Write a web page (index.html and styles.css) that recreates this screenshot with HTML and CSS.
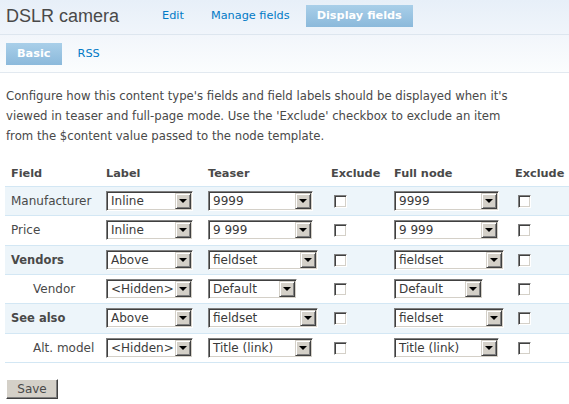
FILE: index.html
```html
<!DOCTYPE html>
<html>
<head>
<meta charset="utf-8">
<link rel="stylesheet" href="styles.css">
</head>
<body>
<div class="header">
  <h1 class="title">DSLR camera</h1>
  <ul class="tabs">
    <li class="tab"><a href="#">Edit</a></li>
    <li class="tab"><a href="#">Manage fields</a></li>
    <li class="tab active"><a href="#">Display fields</a></li>
  </ul>
</div>
<div class="subheader">
  <ul class="tabs">
    <li class="tab active"><a href="#">Basic</a></li>
    <li class="tab"><a href="#">RSS</a></li>
  </ul>
</div>
<p class="intro">Configure how this content type's fields and field labels should be displayed when it's viewed in teaser and full-page mode. Use the 'Exclude' checkbox to exclude an item from the $content value passed to the node template.</p>
<table class="fields">
  <colgroup>
    <col class="c1"><col class="c2"><col class="c3"><col class="c4"><col class="c5"><col class="c6">
  </colgroup>
  <thead>
    <tr><th>Field</th><th>Label</th><th>Teaser</th><th>Exclude</th><th>Full node</th><th>Exclude</th></tr>
  </thead>
  <tbody>
    <tr class="odd">
      <td>Manufacturer</td>
      <td><span class="sel w87"><span class="val">Inline</span><span class="btn"></span></span></td>
      <td><span class="sel w105"><span class="val">9999</span><span class="btn"></span></span></td>
      <td><input type="checkbox" class="cb"></td>
      <td><span class="sel w105"><span class="val">9999</span><span class="btn"></span></span></td>
      <td><input type="checkbox" class="cb"></td>
    </tr>
    <tr class="even">
      <td>Price</td>
      <td><span class="sel w87"><span class="val">Inline</span><span class="btn"></span></span></td>
      <td><span class="sel w105"><span class="val">9 999</span><span class="btn"></span></span></td>
      <td><input type="checkbox" class="cb"></td>
      <td><span class="sel w105"><span class="val">9 999</span><span class="btn"></span></span></td>
      <td><input type="checkbox" class="cb"></td>
    </tr>
    <tr class="odd">
      <td class="group">Vendors</td>
      <td><span class="sel w87"><span class="val">Above</span><span class="btn"></span></span></td>
      <td><span class="sel w110"><span class="val">fieldset</span><span class="btn"></span></span></td>
      <td><input type="checkbox" class="cb"></td>
      <td><span class="sel w110"><span class="val">fieldset</span><span class="btn"></span></span></td>
      <td><input type="checkbox" class="cb"></td>
    </tr>
    <tr class="even">
      <td class="child">Vendor</td>
      <td><span class="sel w87"><span class="val">&lt;Hidden&gt;</span><span class="btn"></span></span></td>
      <td><span class="sel w89"><span class="val">Default</span><span class="btn"></span></span></td>
      <td><input type="checkbox" class="cb"></td>
      <td><span class="sel w89"><span class="val">Default</span><span class="btn"></span></span></td>
      <td><input type="checkbox" class="cb"></td>
    </tr>
    <tr class="odd">
      <td class="group">See also</td>
      <td><span class="sel w87"><span class="val">Above</span><span class="btn"></span></span></td>
      <td><span class="sel w110"><span class="val">fieldset</span><span class="btn"></span></span></td>
      <td><input type="checkbox" class="cb"></td>
      <td><span class="sel w110"><span class="val">fieldset</span><span class="btn"></span></span></td>
      <td><input type="checkbox" class="cb"></td>
    </tr>
    <tr class="even">
      <td class="child">Alt. model</td>
      <td><span class="sel w87"><span class="val">&lt;Hidden&gt;</span><span class="btn"></span></span></td>
      <td><span class="sel w105"><span class="val">Title (link)</span><span class="btn"></span></span></td>
      <td><input type="checkbox" class="cb"></td>
      <td><span class="sel w105"><span class="val">Title (link)</span><span class="btn"></span></span></td>
      <td><input type="checkbox" class="cb"></td>
    </tr>
  </tbody>
</table>
<div class="actions"><button class="save" type="button">Save</button></div>
</body>
</html>
```
FILE: styles.css
```css
html, body {
  margin: 0;
  padding: 0;
  background: #fff;
  overflow: hidden;
}
body {
  font-family: "DejaVu Sans", Verdana, sans-serif;
  font-size: 12px;
  color: #494949;
}
a {
  color: #027ac6;
  text-decoration: none;
}
.header {
  display: flex;
  align-items: flex-start;
  height: 35px;
  box-sizing: border-box;
  padding: 5px 0 0 6px;
  border-bottom: 1px solid #dde6ef;
  background: linear-gradient(#e7eff8, #f0f5fb);
}
.title {
  margin: 0;
  width: 145px;
  font-family: "Liberation Sans", Arial, sans-serif;
  font-weight: normal;
  font-size: 18px;
  line-height: 22px;
  color: #494949;
}
.tabs {
  display: flex;
  gap: 5px;
  margin: 0;
  padding: 0;
  list-style: none;
}
.tab a {
  display: block;
  height: 22px;
  line-height: 22px;
  padding: 0 11px;
  font-size: 11.3px;
}
.tab.active a {
  color: #fff;
  font-weight: bold;
  background: linear-gradient(#a9cfe9, #8bb9db);
}
.subheader {
  height: 38px;
  box-sizing: border-box;
  padding: 8px 0 0 6px;
  border-bottom: 1px solid #e2e9f0;
  background: linear-gradient(#f2f6fb, #fbfdfe);
}
.intro {
  margin: 13px 0 0;
  padding: 0 6px;
  max-width: 512px;
  font-size: 11.7px;
  line-height: 20px;
}
.fields {
  margin: 14px 0 0 5px;
  width: 564px;
  border-collapse: collapse;
  table-layout: fixed;
}
.c1 { width: 95px; }
.c2 { width: 102px; }
.c3 { width: 123px; }
.c4 { width: 63px; }
.c5 { width: 121px; }
.c6 { width: 60px; }
.fields th {
  text-align: left;
  font-size: 11.3px;
  font-weight: bold;
  height: 26px;
  padding: 0 0 0 6px;
  border-bottom: 1px solid #d3e7f4;
  white-space: nowrap;
}
.fields td {
  padding: 4px 0 4.33px 6px;
  height: 20px;
  white-space: nowrap;
  vertical-align: middle;
}
.fields tr.odd td, .fields tr.even td {
  border-bottom: 1px solid #d3e7f4;
}
.fields tr.odd td {
  background: #edf5fa;
}
.fields td.group {
  font-weight: bold;
  font-size: 11.5px;
}
.fields td.child {
  padding-left: 28px;
}
.sel {
  display: inline-flex;
  align-items: center;
  justify-content: space-between;
  height: 20px;
  box-sizing: border-box;
  border: 1px solid;
  border-color: #808080 #ffffff #ffffff #808080;
  box-shadow: inset 1px 1px 0 #404040, inset -1px -1px 0 #d4d0c8;
  background: #fff;
  padding: 1px 1px 1px 4px;
  vertical-align: middle;
}
.w87 { width: 87px; }
.w89 { width: 89px; }
.w105 { width: 105px; }
.w110 { width: 110px; }
.sel .val {
  font-size: 12px;
  color: #3a3a3a;
  line-height: 16px;
}
.sel .btn {
  position: relative;
  display: block;
  width: 16px;
  height: 16px;
  box-sizing: border-box;
  background: #d4d0c8;
  border: 1px solid;
  border-color: #d4d0c8 #404040 #404040 #d4d0c8;
  box-shadow: inset 1px 1px 0 #fff, inset -1px -1px 0 #808080;
  flex: none;
}
.sel .btn::after {
  content: "";
  position: absolute;
  left: 3px;
  top: 5px;
  border-style: solid;
  border-width: 4px 4px 0 4px;
  border-color: #000 transparent transparent transparent;
}
.cb {
  -webkit-appearance: none;
  appearance: none;
  display: inline-block;
  width: 13px;
  height: 13px;
  margin: 0 0 0 3px;
  box-sizing: border-box;
  border: 1px solid;
  border-color: #808080 #ffffff #ffffff #808080;
  box-shadow: inset 1px 1px 0 #404040, inset -1px -1px 0 #d4d0c8;
  background: #fff;
  vertical-align: middle;
}
.actions {
  margin: 16px 0 0 6px;
}
.save {
  width: 52px;
  height: 20px;
  padding: 0;
  font-family: "DejaVu Sans", Verdana, sans-serif;
  font-size: 12px;
  color: #494949;
  background: #d4d0c8;
  border: 1px solid;
  border-color: #fff #404040 #404040 #fff;
  box-shadow: inset -1px -1px 0 #808080;
  border-radius: 0;
}
```
